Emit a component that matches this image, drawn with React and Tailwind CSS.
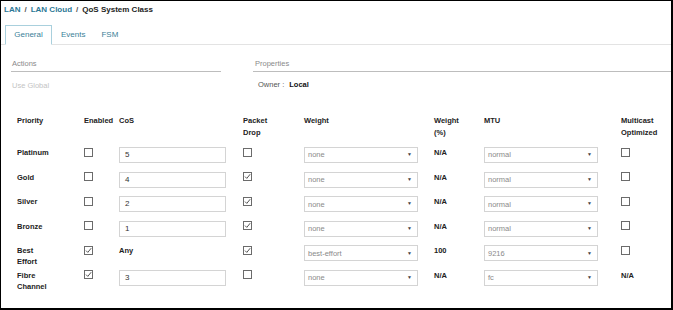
import React from "react";

const Box = ({ checked }) => (
  <svg width="9" height="9" viewBox="0 0 9 9" className="block">
    <rect x="0.5" y="0.5" width="8" height="8" fill="white" stroke="#6b6b6b" strokeWidth="1" />
    {checked && <path d="M2 4.6 L3.8 6.4 L7.2 2.2" fill="none" stroke="#555" strokeWidth="1" />}
  </svg>
);

const Input = ({ value }) => (
  <div className="w-[107px] h-[16px] border border-[#d4d4d4] bg-white flex items-center pl-[5px] text-[8px] text-[#333]">
    {value}
  </div>
);

const Select = ({ value }) => (
  <div className="w-[114px] h-[16px] border border-[#d4d4d4] bg-white flex items-center justify-between pl-[3px] pr-[5px] text-[7.5px] text-[#8a8a8a]">
    <span>{value}</span>
    <span className="text-[5px] text-[#444]">▼</span>
  </div>
);

const rows = [
  { name: ["Platinum"], en: false, cos: "5", drop: false, w: "none", wp: "N/A", mtu: "normal", mc: "box" },
  { name: ["Gold"], en: false, cos: "4", drop: true, w: "none", wp: "N/A", mtu: "normal", mc: "box" },
  { name: ["Silver"], en: false, cos: "2", drop: true, w: "none", wp: "N/A", mtu: "normal", mc: "box" },
  { name: ["Bronze"], en: false, cos: "1", drop: true, w: "none", wp: "N/A", mtu: "normal", mc: "box" },
  { name: ["Best", "Effort"], en: true, cos: null, drop: true, w: "best-effort", wp: "100", mtu: "9216", mc: "box" },
  { name: ["Fibre", "Channel"], en: true, cos: "3", drop: false, w: "none", wp: "N/A", mtu: "fc", mc: "na" },
];

const cols = "grid grid-cols-[67px_35px_124px_61px_130px_50px_137px_1fr]";

export default function App() {
  return (
    <div
      className="w-[673px] h-[310px] bg-white border-l border-t border-r-2 border-b-2 border-black overflow-hidden text-[#222]"
      style={{ fontFamily: '"Liberation Sans", Arial, sans-serif' }}
    >
      {/* breadcrumb */}
      <div className="h-[18px] flex items-center pl-[3px] text-[8px] font-bold leading-none gap-[4px]">
        <span className="text-[#2c7896]">LAN</span>
        <span className="text-[#555]">/</span>
        <span className="text-[#2c7896]">LAN Cloud</span>
        <span className="text-[#555]">/</span>
        <span className="text-[#222]">QoS System Class</span>
      </div>

      {/* tabs */}
      <div className="mt-[7px] h-[19px] border-b border-[#e3e3e3] flex items-end pl-[4px] text-[8px]">
        <div className="w-[47px] h-[20px] -mb-px border border-[#a9d0dd] border-b-white bg-white flex items-center justify-center text-[#3b7f98]">
          General
        </div>
        <div className="ml-[9px] h-[19px] flex items-center text-[#3b7f98]">Events</div>
        <div className="ml-[16px] h-[19px] flex items-center text-[#3b7f98]">FSM</div>
      </div>

      {/* actions / properties */}
      <div className="flex mt-[14px]">
        <div className="ml-[10px] w-[210px]">
          <div className="h-[13px] border-b border-[#bdbdbd] pl-[1px] text-[7.5px] leading-[9px] text-[#8a8a8a]">
            Actions
          </div>
          <div className="mt-[9px] pl-[1px] text-[7.5px] leading-[9px] text-[#c4c4c4]">Use Global</div>
        </div>
        <div className="ml-[32px] flex-1">
          <div className="h-[13px] border-b border-[#bdbdbd] pl-[2px] text-[7.5px] leading-[9px] text-[#8a8a8a]">
            Properties
          </div>
          <div className="mt-[8px] pl-[5px] text-[7.5px] leading-[9px] flex gap-[5px]">
            <span className="text-[#555]">Owner :</span>
            <span className="font-bold text-[#111]">Local</span>
          </div>
        </div>
      </div>

      {/* table header */}
      <div className={`${cols} pl-[16px] mt-[25px] h-[32px] text-[7.5px] font-bold leading-[12px] text-[#222]`}>
        <div>Priority</div>
        <div>Enabled</div>
        <div>CoS</div>
        <div>Packet<br />Drop</div>
        <div>Weight</div>
        <div>Weight<br />(%)</div>
        <div>MTU</div>
        <div>Multicast<br />Optimized</div>
      </div>

      {/* rows */}
      {rows.map((r, i) => (
        <div key={i} className={`${cols} pl-[16px] h-[24.6px] items-start text-[7.5px]`}>
          <div className="font-bold leading-[11px]">
            {r.name.map((n, j) => (
              <div key={j}>{n}</div>
            ))}
          </div>
          <div className="pt-[0.5px]"><Box checked={r.en} /></div>
          <div>
            {r.cos === null ? (
              <div className="font-bold leading-[11px]">Any</div>
            ) : (
              <Input value={r.cos} />
            )}
          </div>
          <div className="pt-[0.5px]"><Box checked={r.drop} /></div>
          <div><Select value={r.w} /></div>
          <div className="font-bold leading-[11px]">{r.wp}</div>
          <div><Select value={r.mtu} /></div>
          <div>
            {r.mc === "box" ? (
              <div className="pt-[0.5px]"><Box checked={false} /></div>
            ) : (
              <div className="font-bold leading-[11px]">N/A</div>
            )}
          </div>
        </div>
      ))}
    </div>
  );
}
